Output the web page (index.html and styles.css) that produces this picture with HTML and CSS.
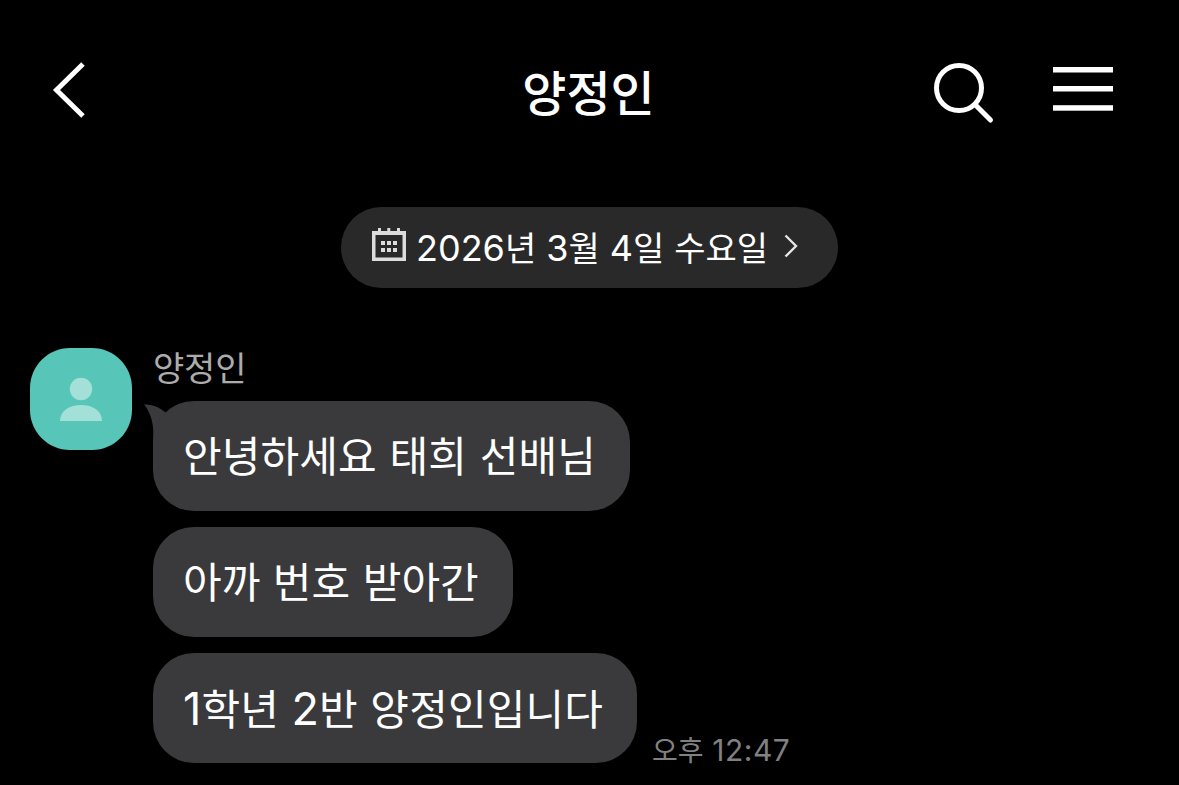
FILE: index.html
```
<!DOCTYPE html>
<html lang="ko">
<head>
    <meta charset="UTF-8">
    <meta name="viewport" content="width=device-width, initial-scale=1.0">
    <title>양정인</title>
    <link rel="stylesheet" href="styles.css">
</head>
<body>
    <header class="header">
        <svg class="back" width="34" height="58" viewBox="0 0 34 58" fill="none" stroke="#fff" stroke-width="5">
            <path d="M31 3 L4.500 29 L31 55"/>
        </svg>
        <h1 class="title">양정인</h1>
        <div class="actions">
            <svg class="search" width="62" height="64" viewBox="0 0 62 64" fill="none" stroke="#fff" stroke-width="5">
                <circle cx="26" cy="27" r="22.500"/>
                <path d="M42 43.500 L57.500 59" stroke-linecap="round"/>
            </svg>
            <svg class="menu" width="60" height="44" viewBox="0 0 60 44" fill="#fff">
                <rect y="0" width="60" height="5.500"/>
                <rect y="19" width="60" height="5.500"/>
                <rect y="38.200" width="60" height="5.500"/>
            </svg>
        </div>
    </header>

    <main class="chat">
        <div class="date">
            <svg class="calendar" width="34" height="34" viewBox="0 0 34 34" fill="#dcdcdc">
                <path fill-rule="evenodd" d="M0 3 H34 V33 H0 Z M3.500 7 V29.500 H30.500 V7 Z"/>
                <path d="M6 0h3v4h-3z M15.300 0h3v4h-3z M25 0h3v4h-3z"/>
                <path d="M9 13h4v4h-4z M15 13h4v4h-4z M21 13h4v4h-4z M9 20h4v4h-4z M15 20h4v4h-4z M21 20h4v4h-4z"/>
            </svg>
            <span class="date-text"><b>2026</b>년 <b>3</b>월 <b>4</b>일 수요일</span>
            <svg class="more" width="14" height="24" viewBox="0 0 14 24" fill="none" stroke="#e6e6e6" stroke-width="2.400">
                <path d="M1.500 1.500 L12 12 L1.500 22.500"/>
            </svg>
        </div>

        <section class="group">
            <svg class="avatar" width="102" height="102" viewBox="0 0 102 102">
                <path fill="#57c5b8" d="M40 0 H62 C84 0 102 18 102 40 V62 C102 84 84 102 62 102 H40 C18 102 0 84 0 62 V40 C0 18 18 0 40 0 Z"/>
                <circle cx="51" cy="41" r="11.200" fill="#a3e0d8"/>
                <path fill="#a3e0d8" d="M30 73 C30 63 39 57 51 57 C63 57 72 63 72 73 Z"/>
            </svg>
            <div class="messages">
                <div class="name">양정인</div>
                <div class="bubble first">
                    <svg class="tail" width="30" height="50" viewBox="0 0 30 50" fill="#3a3a3c">
                        <path d="M0 0.500 C8 0 15 3 21 8 L30 16 V50 H9.300 V28 C9.300 17 5.500 7 0 0.500 Z"/>
                    </svg>
                    안녕하세요 태희 선배님
                </div>
                <div class="bubble">아까 번호 받아간</div>
                <div class="row">
                    <div class="bubble last"><b>1</b>학년 <b>2</b>반 양정인입니다</div>
                    <div class="time">오후 <b>12:47</b></div>
                </div>
            </div>
        </section>
    </main>
</body>
</html>
```

FILE: styles.css
```
* {
    box-sizing: border-box;
}
body {
    margin: 0;
    height: 785px;
    overflow: hidden;
    background: #000;
    color: #fff;
    font-family: Inter, "Noto Sans CJK KR", sans-serif;
    white-space: nowrap;
}
b {
    font-weight: 400;
}
svg {
    display: block;
    flex: none;
}
.header {
    display: grid;
    grid-template-columns: 1fr auto 1fr;
    align-items: center;
    height: 181px;
    padding: 0 66px 0 52px;
}
.back {
    margin-bottom: 2px;
}
.title {
    margin: 7px 0 0 12px;
    font-size: 48px;
    line-height: 60px;
    font-weight: 500;
}
.actions {
    display: flex;
    align-items: center;
    justify-content: flex-end;
    gap: 58px;
}
.search {
    margin-top: 4px;
}
.menu {
    margin-bottom: 4px;
}
.chat {
    padding: 26px 30px 0;
}
.date {
    display: flex;
    align-items: center;
    width: 497px;
    height: 81px;
    margin: 0 auto;
    padding: 0 40px 4px 31px;
    border-radius: 41px;
    background: #292929;
}
.calendar {
    margin-bottom: 1px;
}
.date-text {
    margin: 5px 0 0 10px;
    font-size: 34px;
    line-height: 50px;
    word-spacing: 0.4px;
}
.date-text b {
    font-size: 36px;
}
.more {
    margin-left: auto;
}
.group {
    display: flex;
    gap: 21px;
    margin-top: 60px;
}
.messages {
    display: flex;
    flex-direction: column;
    align-items: flex-start;
    gap: 16px;
}
.name {
    height: 37px;
    color: #acacac;
    font-size: 34px;
    line-height: 42px;
    letter-spacing: -0.2px;
}
.bubble {
    position: relative;
    height: 110px;
    padding: 0 34px 0 30px;
    border-radius: 41px;
    background: #3a3a3c;
    font-size: 42px;
    line-height: 112px;
    letter-spacing: 0.05px;
    word-spacing: 0.6px;
}
.bubble.first {
    letter-spacing: 0.1px;
    word-spacing: 0.9px;
}
.bubble.last {
    letter-spacing: 0.12px;
}
.bubble b {
    font-size: 45px;
}
.tail {
    position: absolute;
    left: -9px;
    top: 3px;
    z-index: -1;
}
.row {
    display: flex;
    align-items: flex-end;
    gap: 15px;
}
.time {
    color: #818181;
    font-size: 28px;
    line-height: 24px;
    word-spacing: 1px;
}
.time b {
    font-size: 30px;
    letter-spacing: 0.5px;
}
```
